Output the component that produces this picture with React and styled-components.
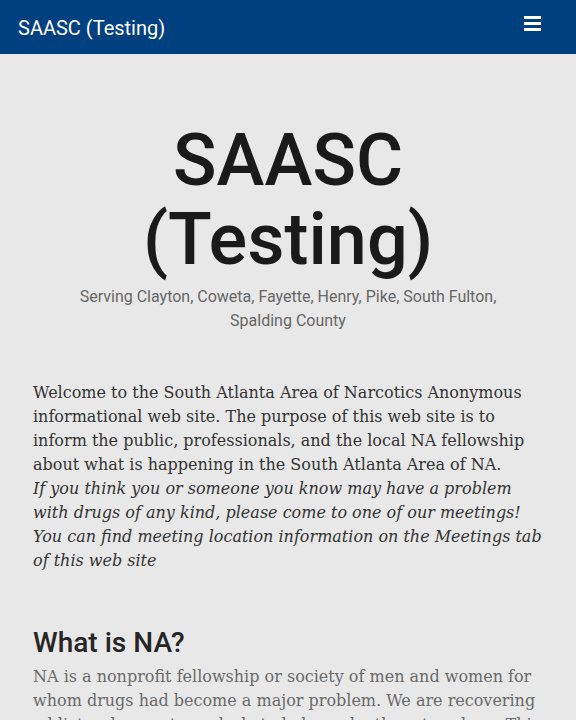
import React from 'react'
import styled, { createGlobalStyle } from 'styled-components'

const Global = createGlobalStyle`
  body {
    margin: 0;
    background: #e8e8e8;
    font-family: "DejaVu Serif", serif;
  }
`

const NavBar = styled.nav`
  display: flex;
  align-items: center;
  justify-content: space-between;
  height: 54px;
  padding: 0 18px;
  background: #004080;
  color: #fff;
`

const Brand = styled.div`
  font-family: Roboto, sans-serif;
  font-size: 20px;
  margin-top: 2px;
`

const Burger = styled.div`
  display: flex;
  flex-direction: column;
  gap: 3px;
  margin-right: 17px;
  margin-top: -8px;
  span {
    display: block;
    width: 17px;
    height: 3px;
    background: #fff;
  }
`

const Hero = styled.header`
  text-align: center;
  padding: 67px 20px 0;
`

const Title = styled.h1`
  margin: 0;
  font-family: "Roboto Medium", Roboto, sans-serif;
  font-weight: 500;
  font-size: 72px;
  line-height: 79px;
  color: #1a1a1a;
`

const Tagline = styled.p`
  margin: 6px auto 0;
  max-width: 440px;
  font-family: Roboto, sans-serif;
  font-size: 16px;
  line-height: 24px;
  color: #666;
`

const Content = styled.main`
  padding: 48px 33px 0;
  color: #333;
  font-size: 16px;
  line-height: 24px;
`

const Para = styled.p`
  margin: 0;
  font-style: ${({ italic }) => (italic ? 'italic' : 'normal')};
  color: ${({ muted }) => (muted ? '#6a6a6a' : '#333')};
`

const Heading = styled.h2`
  margin: 52px 0 4px;
  font-family: "Roboto Medium", Roboto, sans-serif;
  font-weight: 500;
  font-size: 28px;
  line-height: 36px;
  color: #262626;
`

export default () => (
  <>
    <Global />
    <NavBar>
      <Brand>SAASC (Testing)</Brand>
      <Burger><span /><span /><span /></Burger>
    </NavBar>

    <Hero>
      <Title>SAASC<br />(Testing)</Title>
      <Tagline>Serving Clayton, Coweta, Fayette, Henry, Pike, South Fulton, Spalding County</Tagline>
    </Hero>

    <Content>
      <Para>
        Welcome to the South Atlanta Area of Narcotics Anonymous informational web site. The purpose of this web site is to inform the public, professionals, and the local NA fellowship about what is happening in the South Atlanta Area of NA.
      </Para>
      <Para italic>
        If you think you or someone you know may have a problem with drugs of any kind, please come to one of our meetings! You can find meeting location information on the Meetings tab of this web site
      </Para>

      <Heading>What is NA?</Heading>
      <Para muted>
        NA is a nonprofit fellowship or society of men and women for whom drugs had become a major problem. We are recovering addicts who meet regularly to help each other stay clean. This is a program of complete abstinence from all drugs.
      </Para>
    </Content>
  </>
)
